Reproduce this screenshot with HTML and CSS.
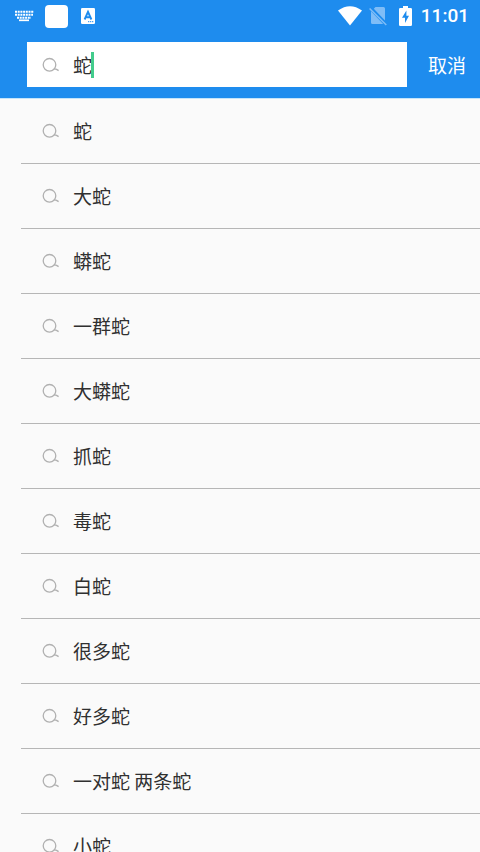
FILE: index.html
```html
<!DOCTYPE html>
<html lang="zh-CN">
<head>
<meta charset="utf-8">
<meta name="viewport" content="width=device-width, initial-scale=1">
<title>搜索</title>
<link rel="stylesheet" href="styles.css">
</head>
<body>
<svg class="defs" aria-hidden="true">
  <symbol id="search" viewBox="0 0 18 16">
    <circle cx="7.5" cy="7.8" r="6.3" fill="none" stroke="currentColor" stroke-width="1.3"/>
    <path d="M11.8 11.6 L14.6 12.3 L16.6 13.6" fill="none" stroke="currentColor" stroke-width="1.4"/>
  </symbol>
</svg>
<header class="top">
  <div class="status">
    <svg class="keyboard" width="20" height="12" viewBox="0 0 20 12" aria-hidden="true">
      <path d="M1 1.8H20M1 4.8H19M3 7.8H17" stroke="#fff" stroke-width="1.9" stroke-dasharray="2 .7" fill="none"/>
      <path d="M5 10.3H15" stroke="#fff" stroke-width="1.7"/>
    </svg>
    <span class="app"></span>
    <svg class="letter" width="14" height="16" viewBox="0 0 14 16" aria-hidden="true">
      <rect width="14" height="16" rx="1.3" fill="#fff"/>
      <path d="M3.6 11.5 L7 3.8 L10.4 11.5 M4.8 9.3H9.2" fill="none" stroke="#1e8cee" stroke-width="1.9"/>
      <path d="M7 13.7H13" stroke="#1e8cee" stroke-width="1" stroke-dasharray="1.3 .7"/>
    </svg>
    <svg class="wifi" width="24" height="20" viewBox="0 0 24 20" aria-hidden="true">
      <path d="M0 4.5 Q12 -4 24 4.5 L12 19.5Z" fill="#fff"/>
    </svg>
    <svg class="sim" width="18" height="20" viewBox="0 0 18 20" aria-hidden="true">
      <path d="M6.5 1H14.5Q16 1 16 2.5V14.5L4.8 2.8ZM2 5.2L14.2 18H3.5Q2 18 2 16.5Z" fill="#7fbdf7"/>
      <path d="M.6 2.5L17.3 19" stroke="#7fbdf7" stroke-width="1.5"/>
    </svg>
    <svg class="battery" width="13" height="20" viewBox="0 0 13 20" aria-hidden="true">
      <path d="M4 0H9V2H11.7Q13 2 13 3.3V18.7Q13 20 11.7 20H1.3Q0 20 0 18.7V3.3Q0 2 1.3 2H4Z" fill="#fff"/>
      <path d="M7.4 4.5L3 11.8H6V17L10 9.8H7.4Z" fill="#1e8cee"/>
    </svg>
    <time class="clock">11:01</time>
  </div>
  <form class="bar">
    <div class="field">
      <svg class="icon" aria-hidden="true"><use href="#search"/></svg>
      <input class="query" type="text" value="蛇" aria-label="搜索">
      <span class="caret"></span>
    </div>
    <button class="cancel" type="button">取消</button>
  </form>
</header>
<main>
  <ul class="list">
    <li><a class="row" href="#"><svg class="icon" aria-hidden="true"><use href="#search"/></svg>蛇</a></li>
    <li><a class="row" href="#"><svg class="icon" aria-hidden="true"><use href="#search"/></svg>大蛇</a></li>
    <li><a class="row" href="#"><svg class="icon" aria-hidden="true"><use href="#search"/></svg>蟒蛇</a></li>
    <li><a class="row" href="#"><svg class="icon" aria-hidden="true"><use href="#search"/></svg>一群蛇</a></li>
    <li><a class="row" href="#"><svg class="icon" aria-hidden="true"><use href="#search"/></svg>大蟒蛇</a></li>
    <li><a class="row" href="#"><svg class="icon" aria-hidden="true"><use href="#search"/></svg>抓蛇</a></li>
    <li><a class="row" href="#"><svg class="icon" aria-hidden="true"><use href="#search"/></svg>毒蛇</a></li>
    <li><a class="row" href="#"><svg class="icon" aria-hidden="true"><use href="#search"/></svg>白蛇</a></li>
    <li><a class="row" href="#"><svg class="icon" aria-hidden="true"><use href="#search"/></svg>很多蛇</a></li>
    <li><a class="row" href="#"><svg class="icon" aria-hidden="true"><use href="#search"/></svg>好多蛇</a></li>
    <li><a class="row" href="#"><svg class="icon" aria-hidden="true"><use href="#search"/></svg>一对蛇 两条蛇</a></li>
    <li><a class="row" href="#"><svg class="icon" aria-hidden="true"><use href="#search"/></svg>小蛇</a></li>
  </ul>
</main>
</body>
</html>
```
FILE: styles.css
```css
* {
  box-sizing: border-box;
}

html {
  scrollbar-width: none;
}

body {
  margin: 0;
  background: #fafafa;
  color: #303030;
  font: 19px/28px "Noto Sans CJK SC", sans-serif;
}

.defs {
  position: absolute;
  width: 0;
  height: 0;
}

.top {
  background: #1e8cee;
  border-bottom: 1px solid #c4e4fb;
}

.status {
  display: flex;
  align-items: center;
  height: 32px;
  padding: 0 11px 0 14px;
}

.keyboard {
  margin-right: 11px;
}

.app {
  width: 23px;
  height: 23px;
  margin-right: 13px;
  border-radius: 4px;
  background: #fff;
}

.wifi {
  margin-left: auto;
}

.sim {
  margin-left: 7px;
}

.battery {
  margin-left: 12px;
}

.clock {
  margin-left: 9px;
  color: #fff;
  font: 500 19px/24px Roboto, sans-serif;
}

.bar {
  display: flex;
  align-items: center;
  margin: 0;
  padding: 10px 14px 11px 27px;
}

.field {
  position: relative;
  display: flex;
  flex: 1;
  align-items: center;
  min-width: 0;
  height: 45px;
  padding-left: 15px;
  background: #fff;
}

.icon {
  flex: none;
  width: 18px;
  height: 16px;
  margin-right: 13px;
  color: #b0b0b0;
}

.query {
  flex: 1;
  min-width: 0;
  padding: 0;
  border: 0;
  outline: 0;
  background: none;
  color: inherit;
  font: inherit;
}

.caret {
  position: absolute;
  top: 10px;
  left: 64px;
  width: 3px;
  height: 26px;
  background: #43cc8c;
}

.cancel {
  margin-left: 21px;
  padding: 0;
  border: 0;
  background: none;
  color: #fff;
  font: inherit;
}

.list {
  margin: 0;
  padding: 0 0 0 21px;
  list-style: none;
}

.row {
  display: flex;
  align-items: center;
  height: 65px;
  padding-left: 21px;
  border-bottom: 1px solid #b6b6b6;
  color: inherit;
  text-decoration: none;
}
```
